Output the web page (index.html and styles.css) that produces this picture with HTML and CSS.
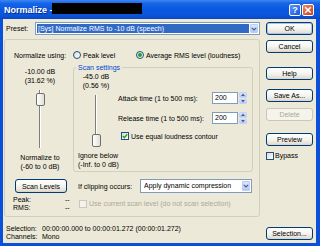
FILE: index.html
```html
<!DOCTYPE html>
<html lang="en">
<head>
    <meta charset="UTF-8">
    <title>Normalize</title>
    <link rel="stylesheet" href="styles.css">
</head>
<body>
<div class="window">
    <div class="titlebar">
        <span class="title">Normalize -</span>
        <span class="redacted"></span>
        <div class="caption-btns">
            <span class="cap cap-help">?</span>
            <span class="cap cap-close">
                <svg width="8" height="8" viewBox="0 0 8 8"><path d="M1.2 1.2L6.8 6.8M6.8 1.2L1.2 6.8" stroke="#fff" stroke-width="1.6"/></svg>
            </span>
        </div>
    </div>

    <div class="client">
        <div class="main">
            <div class="preset-row">
                <span class="preset-label">Preset:</span>
                <div class="combo preset-combo">
                    <span class="combo-text selected">[Sys] Normalize RMS to -10 dB (speech)</span>
                    <span class="combo-arrow"><svg width="6" height="4" viewBox="0 0 6 4"><path d="M0.8 0.8L3 3L5.2 0.8" fill="none" stroke="#4D6185" stroke-width="1.2"/></svg></span>
                </div>
            </div>

            <div class="group">
                <div class="using-row">
                    <span class="using-label">Normalize using:</span>
                    <span class="radio radio-peak"><span class="radio-dot"></span>Peak level</span>
                    <span class="radio"><span class="radio-dot on"></span>Average RMS level (loudness)</span>
                </div>

                <div class="mid">
                    <div class="level-col">
                        <div class="val val-top">-10.00 dB<br>(31.62 %)</div>
                        <div class="slider slider-norm">
                            <span class="track"></span>
                            <span class="thumb" style="top: 3px"></span>
                        </div>
                        <div class="val val-bottom">Normalize to<br>(-60 to 0 dB)</div>
                    </div>

                    <fieldset class="scan">
                        <legend>Scan settings</legend>
                        <div class="scan-body">
                            <div class="scan-left">
                                <div class="val">-45.0 dB<br>(0.56 %)</div>
                                <div class="slider slider-ignore">
                                    <span class="track"></span>
                                    <span class="thumb" style="top: 39px"></span>
                                </div>
                                <div class="val ignore-text">Ignore below<br>(-Inf. to 0 dB)</div>
                            </div>
                            <div class="scan-right">
                                <div class="field-row">
                                    <span class="field-label">Attack time (1 to 500 ms):</span>
                                    <span class="edit">200</span>
                                    <span class="spin">
                                        <span class="spin-btn"><svg width="4" height="3" viewBox="0 0 4 3"><path d="M0 3L2 0.5L4 3Z" fill="#4D6185"/></svg></span>
                                        <span class="spin-btn"><svg width="4" height="3" viewBox="0 0 4 3"><path d="M0 0L2 2.5L4 0Z" fill="#4D6185"/></svg></span>
                                    </span>
                                </div>
                                <div class="field-row release-row">
                                    <span class="field-label">Release time (1 to 500 ms):</span>
                                    <span class="edit">200</span>
                                    <span class="spin">
                                        <span class="spin-btn"><svg width="4" height="3" viewBox="0 0 4 3"><path d="M0 3L2 0.5L4 3Z" fill="#4D6185"/></svg></span>
                                        <span class="spin-btn"><svg width="4" height="3" viewBox="0 0 4 3"><path d="M0 0L2 2.5L4 0Z" fill="#4D6185"/></svg></span>
                                    </span>
                                </div>
                                <div class="check-row contour-row">
                                    <span class="check on"><svg width="6" height="6" viewBox="0 0 6 6"><path d="M0.8 3L2.4 4.6L5.2 1.2" fill="none" stroke="#21A121" stroke-width="1.4"/></svg></span>
                                    Use equal loudness contour
                                </div>
                            </div>
                        </div>
                    </fieldset>
                </div>

                <div class="clip-row">
                    <span class="btn scan-btn">Scan Levels</span>
                    <span class="clip-label">If clipping occurs:</span>
                    <div class="combo clip-combo">
                        <span class="combo-text">Apply dynamic compression</span>
                        <span class="combo-arrow"><svg width="6" height="4" viewBox="0 0 6 4"><path d="M0.8 0.8L3 3L5.2 0.8" fill="none" stroke="#4D6185" stroke-width="1.2"/></svg></span>
                    </div>
                </div>

                <div class="peak-row">
                    <div class="peak-labels">Peak:<br>RMS:</div>
                    <div class="peak-values">--<br>--</div>
                    <div class="check-row disabled">
                        <span class="check"></span>
                        Use current scan level (do not scan selection)
                    </div>
                </div>
            </div>

            <div class="status">
                <div class="status-line"><span class="status-label">Selection:</span>00:00:00.000 to 00:00:01.272 (00:00:01.272)</div>
                <div class="status-line"><span class="status-label">Channels:</span>Mono</div>
            </div>
        </div>

        <div class="side">
            <span class="btn btn-ok">OK</span>
            <span class="btn btn-cancel">Cancel</span>
            <span class="btn btn-help">Help</span>
            <span class="btn btn-save">Save As...</span>
            <span class="btn btn-delete disabled">Delete</span>
            <span class="btn btn-preview">Preview</span>
            <div class="check-row bypass-row">
                <span class="check"></span>Bypass
            </div>
            <span class="btn btn-selection">Selection...</span>
        </div>
    </div>
</div>
</body>
</html>
```

FILE: styles.css
```css
* {
    box-sizing: border-box;
}

html, body {
    margin: 0;
    padding: 0;
}

body {
    width: 320px;
    height: 246px;
    overflow: hidden;
    font-family: "Liberation Sans", Arial, sans-serif;
    font-size: 7px;
    color: #000;
}

.window {
    width: 320px;
    height: 246px;
    display: flex;
    flex-direction: column;
    background: #0B4FDA;
}

/* title bar */
.titlebar {
    flex: none;
    height: 19px;
    display: flex;
    align-items: center;
    padding-left: 4px;
    background: linear-gradient(#3C86F2 0%, #1665E8 18%, #0A58E0 50%, #0A55DA 80%, #0847C8 100%);
}

.title {
    width: 48px;
    color: #fff;
    font-weight: bold;
    font-size: 9px;
    white-space: nowrap;
    text-shadow: 1px 1px 0 #0A2A8C;
}

.redacted {
    align-self: flex-start;
    margin-top: 3px;
    width: 90px;
    height: 11px;
    background: #000;
}

.caption-btns {
    margin-left: auto;
    margin-right: 6px;
    display: flex;
    gap: 1px;
}

.cap {
    width: 12px;
    height: 12px;
    border: 1px solid #fff;
    border-radius: 2px;
    display: flex;
    align-items: center;
    justify-content: center;
    color: #fff;
    font-weight: bold;
    font-size: 9px;
}

.cap-help {
    background: linear-gradient(135deg, #5A98F8, #1C56DA);
}

.cap-close {
    background: linear-gradient(135deg, #EC8A64, #C8401A);
}

/* client area */
.client {
    flex: 1;
    margin: 0 4px 3px 3px;
    background: #ECE9D8;
    display: flex;
}

.main {
    margin-left: 1px;
    width: 256px;
    display: flex;
    flex-direction: column;
}

.preset-row {
    margin-top: 3px;
    height: 13px;
    display: flex;
    align-items: center;
}

.preset-label {
    width: 31px;
    padding-left: 2px;
}

.combo {
    height: 13px;
    border: 1px solid #7F9DB9;
    background: #fff;
    display: flex;
    padding: 1px;
}

.preset-combo {
    width: 225px;
}

.combo-text {
    flex: 1;
    padding-left: 1px;
    line-height: 9px;
    white-space: nowrap;
    overflow: hidden;
}

.combo-text.selected {
    background: #316AC5;
    color: #fff;
    margin-right: 1px;
}

.combo-arrow {
    width: 8px;
    border: 1px solid #B9CCF7;
    border-radius: 1px;
    background: linear-gradient(#DCE7FD, #B5C9F6);
    display: flex;
    align-items: center;
    justify-content: center;
}

/* main group */
.group {
    margin-top: 4px;
    height: 178px;
    border: 1px solid #D0D0BF;
    border-radius: 3px;
    display: flex;
    flex-direction: column;
}

.using-row {
    margin-top: 10px;
    height: 10px;
    display: flex;
    align-items: center;
    padding-left: 9px;
}

.using-label {
    width: 59px;
}

.radio {
    display: flex;
    align-items: center;
    gap: 2px;
    white-space: nowrap;
}

.radio-peak {
    width: 63px;
}

.radio-dot {
    width: 8px;
    height: 8px;
    border: 1px solid #1C5180;
    border-radius: 50%;
    background: linear-gradient(135deg, #DCDBD2, #fff);
    display: flex;
    align-items: center;
    justify-content: center;
}

.radio-dot.on::after {
    content: "";
    width: 4px;
    height: 4px;
    border-radius: 50%;
    background: #21A121;
}

.mid {
    margin-top: 3px;
    display: flex;
    align-items: flex-start;
}

.val {
    line-height: 9px;
    white-space: nowrap;
}

.level-col {
    width: 68px;
    padding-left: 2px;
    text-align: center;
}

.val-top {
    margin-top: 4px;
}

.slider {
    position: relative;
    display: flex;
    justify-content: center;
    margin-top: 5px;
}

.slider-norm {
    height: 58px;
}

.slider-ignore {
    height: 52px;
}

.track {
    width: 2px;
    height: 100%;
    border-left: 1px solid #7E7E7E;
    border-right: 1px solid #fff;
}

.thumb {
    position: absolute;
    left: 50%;
    margin-left: -4px;
    width: 9px;
    height: 13px;
    border: 1px solid #6F6F6F;
    border-radius: 2px;
    background: linear-gradient(to right, #fff, #E2DFD6);
}

.val-bottom {
    margin-top: 5px;
}

/* scan settings */
.scan {
    margin: 0;
    padding: 0 0 2px 0;
    width: 180px;
    min-width: 0;
    border: 1px solid #D0D0BF;
    border-radius: 3px;
}

.scan legend {
    margin-left: 2px;
    padding: 0 2px;
    line-height: 9px;
    color: #0046D5;
}

.scan-body {
    display: flex;
}

.scan-left {
    width: 44px;
    text-align: center;
}

.ignore-text {
    margin-top: 4px;
    padding-left: 4px;
    text-align: left;
}

.scan-right {
    flex: 1;
    padding-top: 20px;
}

.field-row {
    height: 12px;
    display: flex;
    align-items: center;
}

.release-row {
    margin-top: 8px;
}

.field-label {
    width: 94px;
    white-space: nowrap;
}

.edit {
    width: 26px;
    height: 12px;
    border: 1px solid #7F9DB9;
    background: #fff;
    padding-left: 2px;
    line-height: 10px;
}

.spin {
    margin-left: 1px;
    width: 8px;
    height: 12px;
    display: flex;
    flex-direction: column;
    gap: 1px;
}

.spin-btn {
    flex: 1;
    border-radius: 1px;
    background: linear-gradient(#DCE7FD, #B5C9F6);
    border: 1px solid #C3D3F8;
    display: flex;
    align-items: center;
    justify-content: center;
}

.check-row {
    display: flex;
    align-items: center;
    gap: 2px;
    white-space: nowrap;
}

.contour-row {
    margin-top: 7px;
    height: 10px;
    padding-left: 3px;
}

.check {
    flex: none;
    width: 8px;
    height: 8px;
    border: 1px solid #1C5180;
    background: linear-gradient(135deg, #DCDBD2, #fff);
    display: flex;
    align-items: center;
    justify-content: center;
}

.check-row.disabled {
    color: #ACA899;
}

.check-row.disabled .check {
    border-color: #CAC8BB;
    background: #F4F3EE;
}

/* clipping row */
.clip-row {
    margin-top: 7px;
    height: 14px;
    display: flex;
    align-items: center;
    padding-left: 10px;
}

.btn {
    height: 13px;
    border: 1px solid #003C74;
    border-radius: 3px;
    background: linear-gradient(#FFFFFF 0%, #F5F4EF 50%, #E3DFD6 90%, #D6D0C5 100%);
    display: flex;
    align-items: center;
    justify-content: center;
    white-space: nowrap;
}

.btn.disabled {
    border-color: #C9C7BA;
    background: #F5F4EA;
    color: #ACA899;
}

.scan-btn {
    width: 52px;
    height: 14px;
}

.clip-label {
    margin-left: 11px;
    width: 62px;
    white-space: nowrap;
}

.clip-combo {
    width: 112px;
    height: 14px;
}

.clip-combo .combo-text {
    padding-left: 2px;
    line-height: 10px;
}

/* peak / rms */
.peak-row {
    margin-top: 3px;
    display: flex;
    align-items: center;
    line-height: 8px;
}

.peak-labels {
    width: 60px;
    padding-left: 8px;
}

.peak-values {
    width: 14px;
}

/* status */
.status {
    margin-top: 8px;
    line-height: 8px;
}

.status-line {
    display: flex;
    white-space: nowrap;
}

.status-label {
    width: 38px;
    padding-left: 2px;
}

/* right buttons */
.side {
    margin-left: 6px;
    width: 47px;
    display: flex;
    flex-direction: column;
    padding-top: 3px;
    padding-bottom: 3px;
}

.btn-ok {
    box-shadow: inset 0 0 0 1px #A8C2EE;
}

.btn-cancel {
    margin-top: 5px;
}

.btn-help {
    margin-top: 14px;
}

.btn-save {
    margin-top: 9px;
}

.btn-delete {
    margin-top: 6px;
}

.btn-preview {
    margin-top: 12px;
}

.bypass-row {
    margin-top: 5px;
    height: 9px;
    gap: 1px;
}

.btn-selection {
    margin-top: auto;
}
```
